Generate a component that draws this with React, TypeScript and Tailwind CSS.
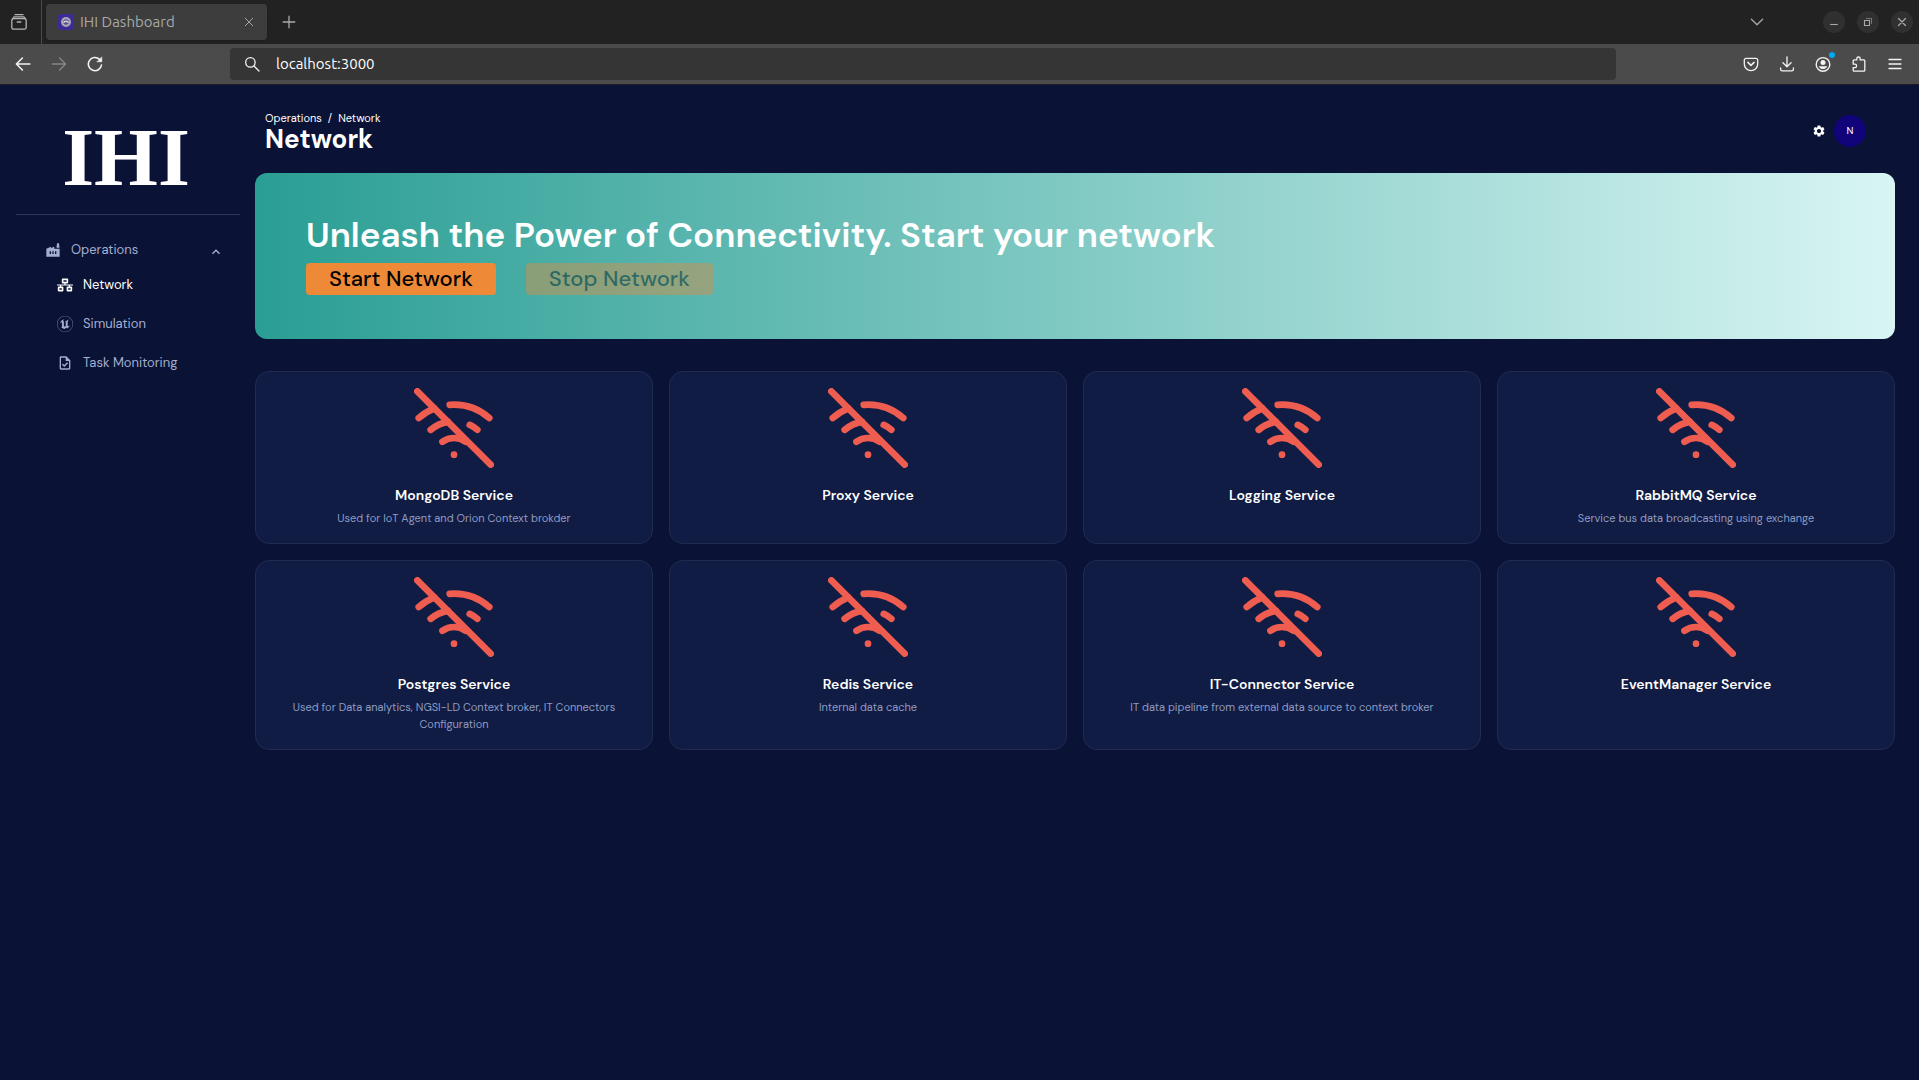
import React from "react";
import { MdFactory, MdOutlineTask, MdSettings, MdExpandLess } from "react-icons/md";
import { FaNetworkWired } from "react-icons/fa";
import { SiUnrealengine } from "react-icons/si";
import { FiWifiOff } from "react-icons/fi";

type Service = { name: string; description?: string };

const services: Service[] = [
  { name: "MongoDB Service", description: "Used for IoT Agent and Orion Context brokder" },
  { name: "Proxy Service" },
  { name: "Logging Service" },
  { name: "RabbitMQ Service", description: "Service bus data broadcasting using exchange" },
  {
    name: "Postgres Service",
    description: "Used for Data analytics, NGSI-LD Context broker, IT Connectors Configuration",
  },
  { name: "Redis Service", description: "Internal data cache" },
  { name: "IT-Connector Service", description: "IT data pipeline from external data source to context broker" },
  { name: "EventManager Service" },
];

const links = [
  { label: "Network", icon: FaNetworkWired, active: true },
  { label: "Simulation", icon: SiUnrealengine, active: false },
  { label: "Task Monitoring", icon: MdOutlineTask, active: false },
];

function Glyph({ children, className = "" }: { children: React.ReactNode; className?: string }) {
  return (
    <svg
      viewBox="0 0 16 16"
      width="16"
      height="16"
      fill="none"
      stroke="currentColor"
      strokeWidth="1.3"
      strokeLinecap="round"
      strokeLinejoin="round"
      aria-hidden="true"
      className={"shrink-0 " + className}
    >
      {children}
    </svg>
  );
}

function BrowserTabs() {
  return (
    <div className="flex h-11 items-center bg-[#222222] text-[#a9a9a9]">
      <div className="flex h-full w-[42px] items-center justify-center border-r border-[#4a4a4a] pr-1">
        <button type="button" aria-label="View recent browsing">
          <Glyph className="text-[#b4b4b4]">
            <rect x="0.8" y="4.6" width="14.4" height="10.6" rx="1.8" />
            <path d="M1.6 4.8 3 2.8h10l1.4 2M4 .7h8M6.2 8h3.6" />
          </Glyph>
        </button>
      </div>
      <div className="ml-1 flex h-9 w-[221px] items-center rounded bg-[#3d3d3d] px-3 shadow">
        <svg viewBox="0 0 16 16" width="16" height="16" aria-hidden="true" className="shrink-0">
          <rect width="16" height="16" rx="3" fill="#3d2a94" />
          <circle cx="8" cy="8" r="5" fill="#a9a6b8" />
          <circle cx="8" cy="8" r="2.800" fill="#5b4f8f" />
          <path d="M5.600 8.800a2.600 2.600 0 0 1 4.800 0" fill="none" stroke="#d8d6e2" strokeWidth="1.400" />
        </svg>
        <span className="ml-1.5 text-[15px] leading-5">IHI Dashboard</span>
        <button type="button" aria-label="Close tab" className="ml-auto">
          <Glyph className="size-3">
            <path d="M3 3l10 10M13 3 3 13" />
          </Glyph>
        </button>
      </div>
      <button type="button" aria-label="New tab" className="ml-3.5">
        <Glyph>
          <path d="M8 2.2v11.6M2.2 8h11.6" />
        </Glyph>
      </button>
      <button type="button" aria-label="List all tabs" className="mr-[58px] ml-auto">
        <Glyph>
          <path d="M2.4 5.2 8 10.8l5.6-5.6" />
        </Glyph>
      </button>
      <div className="mr-1.5 flex gap-3">
        <button type="button" aria-label="Minimize" className="flex size-[22px] items-center justify-center rounded-full bg-[#303030]">
          <Glyph>
            <path d="M4.2 10.5h7.6" strokeLinecap="butt" strokeWidth="1.1" />
          </Glyph>
        </button>
        <button type="button" aria-label="Restore" className="flex size-[22px] items-center justify-center rounded-full bg-[#303030]">
          <Glyph>
            <path d="M4.5 6.5h5v5h-5z" strokeWidth="1.1" strokeLinejoin="miter" />
            <path d="M6.5 4.5h5v5" strokeWidth="1" strokeLinejoin="miter" opacity=".6" />
          </Glyph>
        </button>
        <button type="button" aria-label="Close" className="flex size-[22px] items-center justify-center rounded-full bg-[#303030]">
          <Glyph>
            <path d="M4.5 4.5l7 7M11.5 4.5l-7 7" />
          </Glyph>
        </button>
      </div>
    </div>
  );
}

function BrowserToolbar() {
  return (
    <div className="flex h-10 items-center bg-[#4b4b4b] text-[#f4f4f4]">
      <div className="flex w-[230px] shrink-0 items-center gap-5 pl-[15px]">
        <button type="button" aria-label="Back">
          <Glyph>
            <path d="M1.4 8h13.4M7.4 2 1.4 8l6 6" strokeWidth="1.6" />
          </Glyph>
        </button>
        <button type="button" aria-label="Forward" disabled className="text-[#858585]">
          <Glyph>
            <path d="M1.2 8h13.4M8.6 2l6 6-6 6" strokeWidth="1.4" />
          </Glyph>
        </button>
        <button type="button" aria-label="Reload">
          <Glyph>
            <path d="M14.5 9A6.6 6.6 0 1 1 12.6 3.4l1 1" strokeWidth="1.6" />
            <path d="M14.8 1.2v4.6h-4.6z" fill="currentColor" strokeWidth=".6" />
          </Glyph>
        </button>
      </div>
      <label className="flex h-8 flex-1 items-center rounded bg-[#353535] px-3.5">
        <Glyph>
          <circle cx="6.4" cy="6.4" r="4.7" />
          <path d="m10 10 5 5" />
        </Glyph>
        <input
          type="text"
          aria-label="Address"
          defaultValue="localhost:3000"
          className="ml-4 min-w-0 flex-1 bg-transparent text-[15px] leading-5 text-white outline-none"
        />
      </label>
      <div className="flex w-[303px] shrink-0 items-center justify-end gap-5 pr-4">
        <button type="button" aria-label="Save to Pocket">
          <Glyph>
            <path d="M3 2.4h10a1.7 1.7 0 0 1 1.7 1.7V8a6.7 6.7 0 0 1-13.4 0V4.1A1.7 1.7 0 0 1 3 2.4z" />
            <path d="m4.9 6.4 3.1 3 3.1-3" strokeWidth="1.5" />
          </Glyph>
        </button>
        <button type="button" aria-label="Downloads">
          <Glyph>
            <path d="M8 .8v9.8M3.9 6.8 8 10.8l4.1-4M1.6 12v1.2a1.6 1.6 0 0 0 1.6 1.6h9.6a1.6 1.6 0 0 0 1.6-1.6V12" />
          </Glyph>
        </button>
        <button type="button" aria-label="Account" className="relative">
          <Glyph>
            <circle cx="8" cy="8.4" r="6.8" strokeWidth="1.4" />
            <circle cx="8" cy="6.4" r="2.5" fill="currentColor" stroke="none" />
            <path d="M3.8 10.2h8.4c-.6 1.9-2.3 2.8-4.2 2.8s-3.600-.9-4.200-2.800z" fill="currentColor" stroke="none" />
          </Glyph>
          <span className="absolute -top-1 -right-1 size-1.5 rounded-full bg-[#00a8f5]" />
        </button>
        <button type="button" aria-label="Extensions">
          <Glyph>
            <path d="M2.2 5.3V4.9a1 1 0 0 1 1-1h2.600V2.700a1.700 1.700 0 0 1 3.400 0v1.200h3.600a1 1 0 0 1 1 1v9.300a1 1 0 0 1-1 1H3.200a1 1 0 0 1-1-1v-2.600h1.700a1.700 1.700 0 0 0 0-3.400H2.200z" />
          </Glyph>
        </button>
        <button type="button" aria-label="Menu">
          <Glyph>
            <path d="M2 3.5h12M2 8h12M2 12.5h12" />
          </Glyph>
        </button>
      </div>
    </div>
  );
}

function Sidebar() {
  return (
    <aside className="w-60 shrink-0 pl-4">
      <div className="flex h-[130px] items-center justify-center border-b border-[#30375a] pt-4 pr-1 font-['Liberation_Serif',serif] text-[82px] leading-none font-bold text-white">
        IHI
      </div>
      <nav className="pt-[25px] text-[13px] leading-5 text-[#a3aed0]">
        <button type="button" aria-expanded="true" className="flex w-full items-center pr-4 pl-[29px]">
          <MdFactory className="size-4" />
          <span className="ml-2.5">Operations</span>
          <MdExpandLess className="mt-1 ml-auto size-4" />
        </button>
        <ul className="flex flex-col gap-[19px] pt-[15px] pl-[41px]">
          {links.map(({ label, icon: Icon, active }) => (
            <li key={label}>
              <a href="#" aria-current={active ? "page" : undefined} className={active ? "flex items-center gap-2.5 text-white" : "flex items-center gap-2.5"}>
                <Icon className="size-4" />
                {label}
              </a>
            </li>
          ))}
        </ul>
      </nav>
    </aside>
  );
}

function PageHeader() {
  return (
    <header className="flex h-[88px] items-center justify-between pt-1 pr-[29px] pl-2.5">
      <div>
        <nav aria-label="Breadcrumb" className="flex gap-1.5 text-[11px] leading-4">
          <a href="#">Operations</a>
          <span>/</span>
          <a href="#">Network</a>
        </nav>
        <h1 className="text-[26px] leading-[26px] font-bold">Network</h1>
      </div>
      <div className="flex items-center gap-2">
        <button type="button" aria-label="Settings">
          <MdSettings className="size-3.5" />
        </button>
        <button type="button" aria-label="Profile" className="size-8 rounded-full bg-[#11047a] text-[10px] leading-8">
          N
        </button>
      </div>
    </header>
  );
}

function Banner() {
  return (
    <section className="rounded-xl bg-linear-to-r/srgb from-[#2a9e94] to-[#d8f5f3] pt-10 pb-11 pl-[51px]">
      <h2 className="text-[35px] leading-[44px] font-semibold">Unleash the Power of Connectivity. Start your network</h2>
      <div className="mt-1.5 flex gap-[30px] text-[22px] leading-8 font-medium text-black">
        <button type="button" className="rounded bg-[#ee8a37] px-[23px]">
          Start Network
        </button>
        <button type="button" disabled className="rounded bg-[#ee8a37] px-[23px] opacity-40">
          Stop Network
        </button>
      </div>
    </section>
  );
}

function ServiceCard({ name, description }: Service) {
  return (
    <article className="flex flex-col items-center rounded-[14px] border border-[#212b52] bg-[#111c44] px-8 py-4 text-center">
      <FiWifiOff className="size-20 text-[#ee5d50]" aria-hidden="true" />
      <h3 className="mt-4 text-sm leading-[22px] font-semibold">{name}</h3>
      <p className="mt-1 min-h-[17px] text-[11px] leading-[17px] text-[#8f9bc2]">{description}</p>
    </article>
  );
}

export default function App() {
  return (
    <div className="flex min-h-screen flex-col bg-[#0a1235] font-['DM_Sans','Inter',sans-serif] text-white">
      <div className="border-b border-[#1c1c24] font-['Ubuntu','Open_Sans',sans-serif]">
        <BrowserTabs />
        <BrowserToolbar />
      </div>
      <div className="flex flex-1">
        <Sidebar />
        <main className="min-w-0 flex-1 pr-6 pl-[15px]">
          <PageHeader />
          <Banner />
          <div className="grid grid-cols-4 gap-4 pt-8">
            {services.map((service) => (
              <ServiceCard key={service.name} {...service} />
            ))}
          </div>
        </main>
      </div>
    </div>
  );
}
